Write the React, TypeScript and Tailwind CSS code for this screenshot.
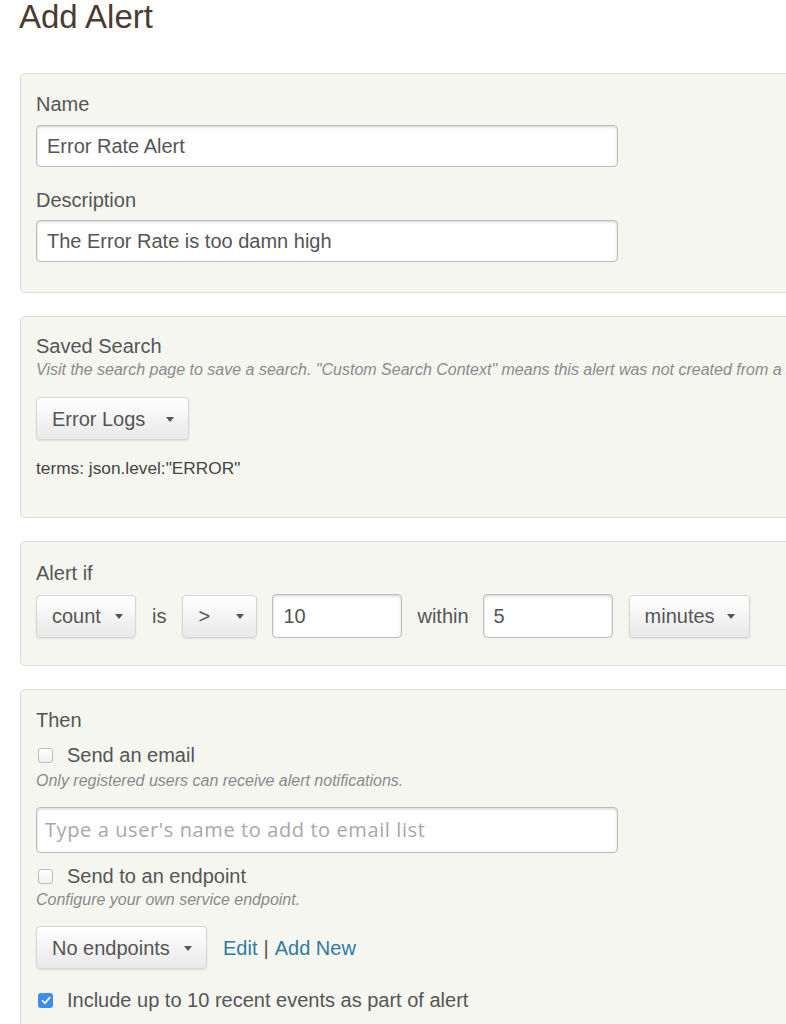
import { ReactNode } from "react";

const FONT = "font-['Liberation_Sans',Arial,sans-serif]";

function Panel({ children, className = "" }: { children: ReactNode; className?: string }) {
  return (
    <div
      className={`ml-[20px] w-[900px] rounded-[5px] border border-[#dcdcd5] bg-[#f6f6f1] pl-[15px] ${className}`}
    >
      {children}
    </div>
  );
}

function Label({ children }: { children: ReactNode }) {
  return <div className="text-[20px] leading-[28px] text-[#555]">{children}</div>;
}

function Help({ children }: { children: ReactNode }) {
  return (
    <div className="whitespace-nowrap text-[16px] italic leading-[20px] text-[#8a8a8a]">
      {children}
    </div>
  );
}

function Caret() {
  return (
    <span className="block h-0 w-0 border-x-[4px] border-t-[5px] border-x-transparent border-t-[#555]" />
  );
}

function DropButton({
  label,
  width,
  gap,
  className = "",
}: {
  label: string;
  width: string;
  gap: string;
  className?: string;
}) {
  return (
    <button
      type="button"
      className={`inline-flex h-[43px] items-center rounded-[4px] border border-[#d6d6d6] bg-gradient-to-b from-white to-[#e9e9e9] pl-[15px] text-[20px] text-[#555] shadow-[0_1px_2px_rgba(0,0,0,0.1)] ${width} ${className}`}
    >
      <span>{label}</span>
      <span className={`flex items-center pt-[1px] ${gap}`}>
        <Caret />
      </span>
    </button>
  );
}

function TextBox({
  value,
  placeholder,
  className = "",
}: {
  value?: string;
  placeholder?: string;
  className?: string;
}) {
  return (
    <div
      className={`flex items-center rounded-[4px] border border-[#bdbdbd] bg-white px-[10px] shadow-[inset_0_1px_3px_rgba(0,0,0,0.18)] ${className}`}
    >
      {value ? (
        <span className="text-[20px] text-[#555]">{value}</span>
      ) : (
        <span className="-ml-[2px] whitespace-nowrap font-['Open_Sans',sans-serif] text-[20px] tracking-[0.6px] text-[#a8a8a8]">
          {placeholder}
        </span>
      )}
    </div>
  );
}

function Check({ checked = false }: { checked?: boolean }) {
  if (checked) {
    return (
      <span className="flex h-[15px] w-[15px] items-center justify-center rounded-[3px] bg-[#3b8ef0]">
        <svg width="10" height="9" viewBox="0 0 10 9" fill="none">
          <path d="M1.5 4.8 L4 7.2 L8.6 1.6" stroke="white" strokeWidth="1.8" strokeLinecap="round" strokeLinejoin="round" />
        </svg>
      </span>
    );
  }
  return (
    <span className="h-[15px] w-[15px] rounded-[3px] border border-[#bcbcbc] bg-gradient-to-b from-white to-[#f0f0f0]" />
  );
}

function CheckRow({ checked, children, className = "" }: { checked?: boolean; children: ReactNode; className?: string }) {
  return (
    <div className={`flex h-[28px] items-center pl-[2px] ${className}`}>
      <Check checked={checked} />
      <span className="ml-[14px] text-[20px] leading-[28px] text-[#555]">{children}</span>
    </div>
  );
}

export default function App() {
  return (
    <div className={`w-[786px] overflow-hidden bg-white pb-10 ${FONT}`}>
      <h1 className="ml-[19px] text-[33px] leading-[33px] text-[#4b3c32]">Add Alert</h1>

      {/* Name / description */}
      <Panel className="mt-[40px] pt-[16px] pb-[30px]">
        <Label>Name</Label>
        <TextBox value="Error Rate Alert" className="mt-[7px] h-[42px] w-[582px]" />
        <div className="mt-[19px]">
          <Label>Description</Label>
        </div>
        <TextBox value="The Error Rate is too damn high" className="mt-[6px] h-[42px] w-[582px]" />
      </Panel>

      {/* Saved search */}
      <Panel className="mt-[23px] pt-[15px] pb-[37px]">
        <Label>Saved Search</Label>
        <Help>
          Visit the search page to save a search. "Custom Search Context" means this alert was not created from a saved search.
        </Help>
        <DropButton label="Error Logs" width="w-[153px]" gap="ml-[21px]" className="mt-[17px]" />
        <div className="mt-[16px] text-[17.3px] leading-[24px] text-[#444]">terms: json.level:"ERROR"</div>
      </Panel>

      {/* Condition */}
      <Panel className="mt-[23px] pt-[17px] pb-[27px]">
        <Label>Alert if</Label>
        <div className="mt-[7px] flex h-[44px] items-center text-[20px] text-[#555]">
          <DropButton label="count" width="w-[100px]" gap="ml-[14px]" />
          <span className="ml-[16px]">is</span>
          <DropButton label=">" width="w-[75px]" gap="ml-[26px]" className="ml-[16px]" />
          <TextBox value="10" className="ml-[15px] h-[44px] w-[130px]" />
          <span className="ml-[15px]">within</span>
          <TextBox value="5" className="ml-[14px] h-[44px] w-[130px]" />
          <DropButton label="minutes" width="w-[121px]" gap="ml-[12px]" className="ml-[16px]" />
        </div>
      </Panel>

      {/* Actions */}
      <Panel className="mt-[23px] pt-[16px] pb-[30px]">
        <Label>Then</Label>
        <CheckRow className="mt-[7px]">Send an email</CheckRow>
        <div className="mt-[2px]">
          <Help>Only registered users can receive alert notifications.</Help>
        </div>
        <TextBox placeholder="Type a user's name to add to email list" className="mt-[16px] h-[46px] w-[582px]" />
        <CheckRow className="mt-[9px]">Send to an endpoint</CheckRow>
        <Help>Configure your own service endpoint.</Help>
        <div className="mt-[16px] flex items-center text-[20px]">
          <DropButton label="No endpoints" width="w-[171px]" gap="ml-[14px]" />
          <a className="ml-[16px] text-[#2f7ba0]">Edit</a>
          <span className="mx-[6px] text-[#555]">|</span>
          <a className="text-[#2f7ba0]">Add New</a>
        </div>
        <CheckRow checked className="mt-[17px]">
          Include up to 10 recent events as part of alert
        </CheckRow>
      </Panel>
    </div>
  );
}
